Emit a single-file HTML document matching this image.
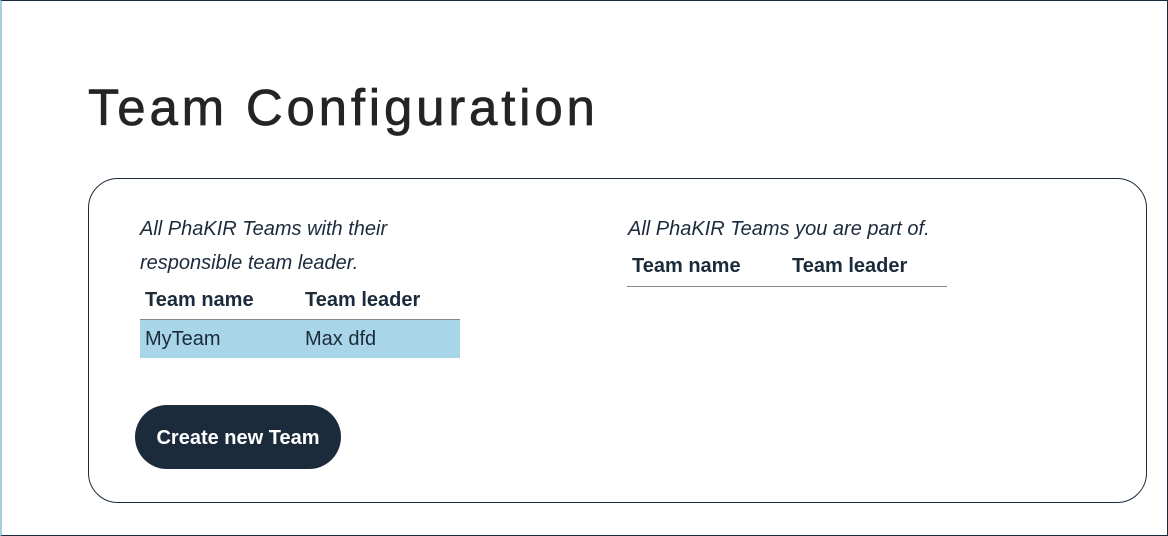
<!DOCTYPE html>
<html><head><style>
html,body{margin:0;padding:0}
body{width:1168px;height:536px;position:relative;background:#fff;font-family:"Liberation Sans",sans-serif;color:#1c2b3c;overflow:hidden}
.frame{position:absolute;left:0;top:0;border-top:1px solid #1c2b3c;border-right:1px solid #1c2b3c;border-bottom:1px solid #1c2b3c;border-left:2px solid #a9cde3;box-sizing:border-box;width:1168px;height:536px}
h1{position:absolute;left:88px;top:78px;margin:0;font-size:51px;font-weight:normal;letter-spacing:3.8px;color:#242424;line-height:60px;-webkit-text-stroke:0.7px #242424}
.card{position:absolute;left:88px;top:178px;width:1059px;height:325px;border:1px solid #1c2b3c;border-radius:30px;box-sizing:border-box}
.it{position:absolute;font-style:italic;font-size:20px;line-height:34px;color:#1c2b3c}
table{position:absolute;border-collapse:collapse;font-size:20px}
th{text-align:left;font-weight:bold;padding:0 5px;height:38px;border-bottom:1px solid #888}
td{padding:0 5px;height:38px;background:#a8d5e8}
.btn{position:absolute;left:135px;top:405px;width:206px;height:64px;border-radius:32px;background:#1c2b3c;color:#fff;font-weight:bold;font-size:20px;line-height:66px;text-align:center}
</style></head><body>
<div class="frame"></div>
<h1>Team Configuration</h1>
<div class="card"></div>
<div class="it" style="left:140px;top:212px">All PhaKIR Teams with their<br>responsible team leader.</div>
<table style="left:140px;top:281px;width:320px">
<tr><th style="width:150px">Team name</th><th>Team leader</th></tr>
<tr><td>MyTeam</td><td>Max dfd</td></tr>
</table>
<div class="btn">Create new Team</div>
<div class="it" style="left:628px;top:212px">All PhaKIR Teams you are part of.</div>
<table style="left:627px;top:246px;width:320px">
<tr><th style="width:150px;height:39px;padding-top:1px">Team name</th><th style="padding-top:1px">Team leader</th></tr>
</table>
</body></html>
